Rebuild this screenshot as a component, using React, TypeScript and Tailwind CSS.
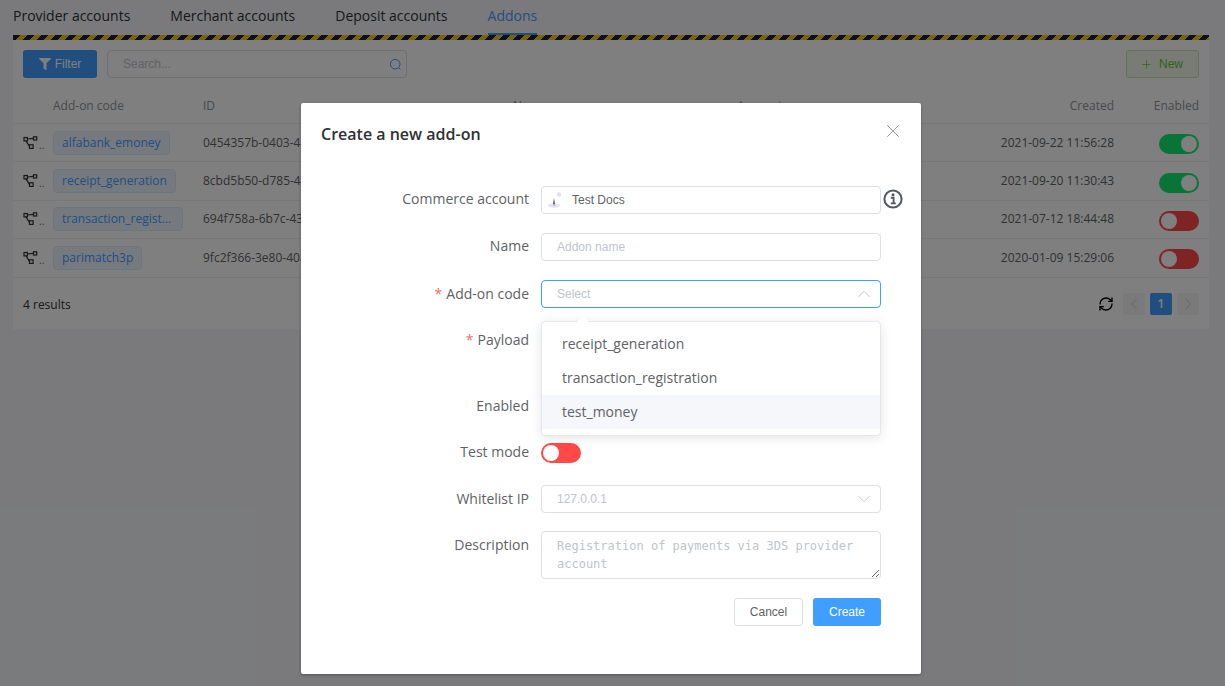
import { ChevronDown, ChevronLeft, ChevronRight, ChevronUp, Plus, RefreshCw, X } from "lucide-react";
import { FaFilter } from "react-icons/fa";

const rows = [
  { code: "alfabank_emoney", id: "0454357b-0403-4a1c-9d11-5c3e7f20a1b4", created: "2021-09-22 11:56:28", on: true },
  { code: "receipt_generation", id: "8cbd5b50-d785-4e02-8a6f-1b7d9c44e6f0", created: "2021-09-20 11:30:43", on: true },
  { code: "transaction_registration", id: "694f758a-6b7c-43d8-b2e1-7a90c5d13f22", created: "2021-07-12 18:44:48", on: false },
  { code: "parimatch3p", id: "9fc2f366-3e80-40a7-95cb-2ed8146b7a09", created: "2020-01-09 15:29:06", on: false },
];

function Toggle({ on }: { on: boolean }) {
  return (
    <span className={`flex h-5 w-10 shrink-0 rounded-full p-0.5 ${on ? "justify-end bg-[#13e870]" : "justify-start bg-[#ff4949]"}`}>
      <span className="h-4 w-4 rounded-full bg-white" />
    </span>
  );
}

function FlowIcon() {
  return (
    <svg width="16" height="14" viewBox="0 0 16 14" fill="none" stroke="currentColor" strokeWidth="1.2">
      <rect x="1" y="1.5" width="3.4" height="3.4" />
      <rect x="10.5" y="0.8" width="3.2" height="3.2" />
      <rect x="6.5" y="8.8" width="3.6" height="3.6" />
      <path d="M4.4 3 10.5 2.4M3 4.9 6.5 10.4" />
    </svg>
  );
}

function FormRow({ label, required, className, children }: { label: string; required?: boolean; className: string; children: React.ReactNode }) {
  return (
    <div className={`flex ${className}`}>
      <label className="w-[220px] shrink-0 pr-3 text-right text-[14px] text-[#606266]">
        {required && <span className="mr-1 text-[#f56c6c]">*</span>}
        {label}
      </label>
      <div className="w-[340px] shrink-0">{children}</div>
    </div>
  );
}

export default function App() {
  return (
    <div className="relative h-[686px] w-[1225px] overflow-hidden bg-[#f4f5f9] font-['Open_Sans',sans-serif]">
      <nav className="flex h-[35px] gap-10 pl-[13px] text-[14px] leading-[32px] text-[#303133]">
        <span>Provider accounts</span>
        <span>Merchant accounts</span>
        <span>Deposit accounts</span>
        <span className="border-b-2 border-[#409eff] text-[#409eff]">Addons</span>
      </nav>

      <section className="mx-[13px] h-[294px] w-[1196px] bg-white">
        <div className="h-[5px] bg-[repeating-linear-gradient(135deg,#1c2030_0,#1c2030_5.4px,#f0c91e_5.4px,#f0c91e_9.9px)]" />

        <div className="flex justify-between px-2.5 pt-2.5">
          <div className="flex gap-2.5">
            <button className="flex h-7 w-[74px] items-center justify-center gap-1 rounded-[3px] bg-[#409eff] font-['Liberation_Sans',sans-serif] text-[12px] text-white">
              <FaFilter size={12} />
              Filter
            </button>
            <div className="flex h-7 w-[300px] items-center justify-between rounded-[4px] border border-[#dcdfe6] pl-[15px] pr-[4px] font-['Liberation_Sans',sans-serif] text-[12px] text-[#c0c4cc]">
              Search...
              <svg width="13" height="13" viewBox="0 0 13 13" fill="none" stroke="#409eff" strokeWidth="1">
                <circle cx="6.2" cy="6.2" r="4.8" />
                <path d="M9.8 9.8 11.5 11.5" />
              </svg>
            </div>
          </div>
          <button className="flex h-7 w-[73px] items-center justify-center gap-1.5 rounded-[3px] border border-[#c2e7b0] bg-[#f0f9eb] pr-0.5 font-['Liberation_Sans',sans-serif] text-[12px] text-[#67c23a]">
            <Plus size={13} strokeWidth={1.3} />
            New
          </button>
        </div>

        <div className="mt-3 grid h-[34px] grid-cols-[30px_150px_310px_224px_1fr_85px] items-center border-b border-[#ebeef5] px-2.5 pb-[2px] text-[12px] text-[#909399]">
          <span />
          <span>Add-on code</span>
          <span>ID</span>
          <span>Name</span>
          <span className="flex justify-between">
            Account
            <span>Created</span>
          </span>
          <span className="text-right">Enabled</span>
        </div>

        {rows.map((row) => (
          <div
            key={row.code}
            className="grid h-[38.4px] grid-cols-[30px_150px_310px_1fr_85px] items-center border-b border-[#ebeef5] px-2.5 text-[12px] text-[#606266]"
          >
            <span className="flex items-end text-[#303133]">
              <FlowIcon />
              <span className="text-[10px] leading-[10px] text-[#606266]">..</span>
            </span>
            <span className="block h-6 w-fit max-w-[130px] truncate rounded-[4px] border border-[#d9ecff] bg-[#ecf5ff] px-2 text-[12px] leading-[22px] text-[#409eff]">
              {row.code}
            </span>
            <span className="truncate">{row.id}</span>
            <span className="text-right">{row.created}</span>
            <span className="flex justify-end pt-[3px]">
              <Toggle on={row.on} />
            </span>
          </div>
        ))}

        <div className="flex items-center justify-between px-2.5 pt-[15px] text-[12px] text-[#303133]">
          <span className="mt-0.5">4 results</span>
          <div className="flex items-center gap-[5px]">
            <RefreshCw size={16} strokeWidth={2} className="mr-1 text-black" />
            <span className="flex h-[22px] w-[22px] items-center justify-center rounded-[2px] bg-[#f4f4f5] text-[#c0c4cc]">
              <ChevronLeft size={20} strokeWidth={1.1} />
            </span>
            <span className="flex h-[22px] w-[22px] items-center justify-center rounded-[2px] bg-[#409eff] font-semibold text-white">1</span>
            <span className="flex h-[22px] w-[22px] items-center justify-center rounded-[2px] bg-[#f4f4f5] text-[#c0c4cc]">
              <ChevronRight size={20} strokeWidth={1.1} />
            </span>
          </div>
        </div>
      </section>

      {/* modal */}
      <div className="absolute inset-0 bg-black/50" />
      <div className="absolute left-[301px] top-[103px] h-[571px] w-[620px] rounded-[2px] bg-white pl-5 shadow-[0_1px_3px_rgba(0,0,0,0.3)]">
        <div className="flex items-center justify-between pr-[17px] pt-[19px]">
          <h2 className="text-[16px] font-semibold leading-6 text-[#303133]">Create a new add-on</h2>
          <X size={22} strokeWidth={1} className="-mt-1.5 text-[#909399]" />
        </div>

        <div className="pt-[40px]">
          <FormRow label="Commerce account" className="mb-[19px] h-7 leading-[26px]">
            <div className="relative flex h-7 items-center rounded-[4px] border border-[#dcdfe6] pl-[5px] font-['Liberation_Sans',sans-serif] text-[12px] text-[#606266]">
              <svg width="16" height="18" viewBox="0 0 16 18" className="mr-[9px]">
                <circle cx="12" cy="3.5" r="2.2" fill="#dde5f2" />
                <ellipse cx="7" cy="14.5" rx="6" ry="2.2" fill="#dfe7f3" />
                <path d="M7 7 8 13H6Z" fill="#4a5468" />
                <path d="M6.4 12.5h1.2v2.2H6.4Z" fill="#e26a4a" />
              </svg>
              Test Docs
              <svg width="20" height="20" viewBox="0 0 20 20" className="absolute -right-[23px] top-[2px] text-[#54585f]" fill="none" stroke="currentColor">
                <circle cx="10" cy="10" r="8.6" strokeWidth="2" />
                <circle cx="10" cy="5.8" r="1.5" fill="currentColor" stroke="none" />
                <path d="M7.8 8.8h2.8v5.2M7.8 14.4h5" strokeWidth="1.9" />
              </svg>
            </div>
          </FormRow>

          <FormRow label="Name" className="mb-[19px] h-7 leading-[26px]">
            <div className="flex h-7 items-center rounded-[4px] border border-[#dcdfe6] pl-[15px] font-['Liberation_Sans',sans-serif] text-[12px] text-[#c0c4cc]">
              Addon name
            </div>
          </FormRow>

          <FormRow label="Add-on code" required className="mb-[19px] h-7 leading-[27px]">
            <div className="relative">
              <div className="flex h-7 items-center justify-between rounded-[4px] border border-[#409eff] pl-[15px] pr-[5px] font-['Liberation_Sans',sans-serif] text-[12px] text-[#c0c4cc]">
                Select
                <ChevronUp size={22} strokeWidth={1} />
              </div>
              <div className="absolute left-0 top-[41px] z-10 h-[115px] w-[340px] rounded-[4px] border border-[#e4e7ed] bg-white py-[5px] text-[14px] text-[#606266] shadow-[0_2px_12px_rgba(0,0,0,0.1)]">
                <span className="absolute -top-[6px] left-[35px] h-0 w-0 border-x-[6px] border-b-[6px] border-x-transparent border-b-white" />
                <div className="h-[34px] pl-5 leading-[34px]">receipt_generation</div>
                <div className="h-[34px] pl-5 leading-[34px]">transaction_registration</div>
                <div className="h-[34px] bg-[#f5f7fa] pl-5 leading-[34px]">test_money</div>
              </div>
            </div>
          </FormRow>

          <FormRow label="Payload" required className="mb-[19px] h-[46px] leading-[26px]">
            <div className="h-[46px]" />
          </FormRow>

          <FormRow label="Enabled" className="mb-[18px] h-7 leading-[28px]">
            <div className="h-7" />
          </FormRow>

          <FormRow label="Test mode" className="mb-[19px] h-7 leading-[28px]">
            <div className="flex h-7 items-center pt-0.5">
              <Toggle on={false} />
            </div>
          </FormRow>

          <FormRow label="Whitelist IP" className="mb-[18px] h-7 leading-[28px]">
            <div className="flex h-7 items-center justify-between rounded-[4px] border border-[#dcdfe6] pl-[15px] pr-[5px] font-['Liberation_Sans',sans-serif] text-[12px] text-[#c0c4cc]">
              127.0.0.1
              <ChevronDown size={22} strokeWidth={1} />
            </div>
          </FormRow>

          <FormRow label="Description" className="mb-[19px] h-12 leading-[28px]">
            <textarea
              readOnly
              placeholder="Registration of payments via 3DS provider account"
              className="block h-12 w-[340px] rounded-[4px] border border-[#dcdfe6] px-[15px] py-[5px] font-['DejaVu_Sans_Mono',monospace] text-[12px] leading-[18px] outline-none placeholder:text-[#c0c4cc]"
            />
          </FormRow>

          <div className="flex w-[560px] justify-end gap-2.5 font-['Liberation_Sans',sans-serif] text-[12px]">
            <button className="h-7 w-[69px] rounded-[3px] border border-[#dcdfe6] bg-white text-[#606266]">Cancel</button>
            <button className="h-7 w-[68px] rounded-[3px] bg-[#409eff] text-white">Create</button>
          </div>
        </div>
      </div>
    </div>
  );
}
